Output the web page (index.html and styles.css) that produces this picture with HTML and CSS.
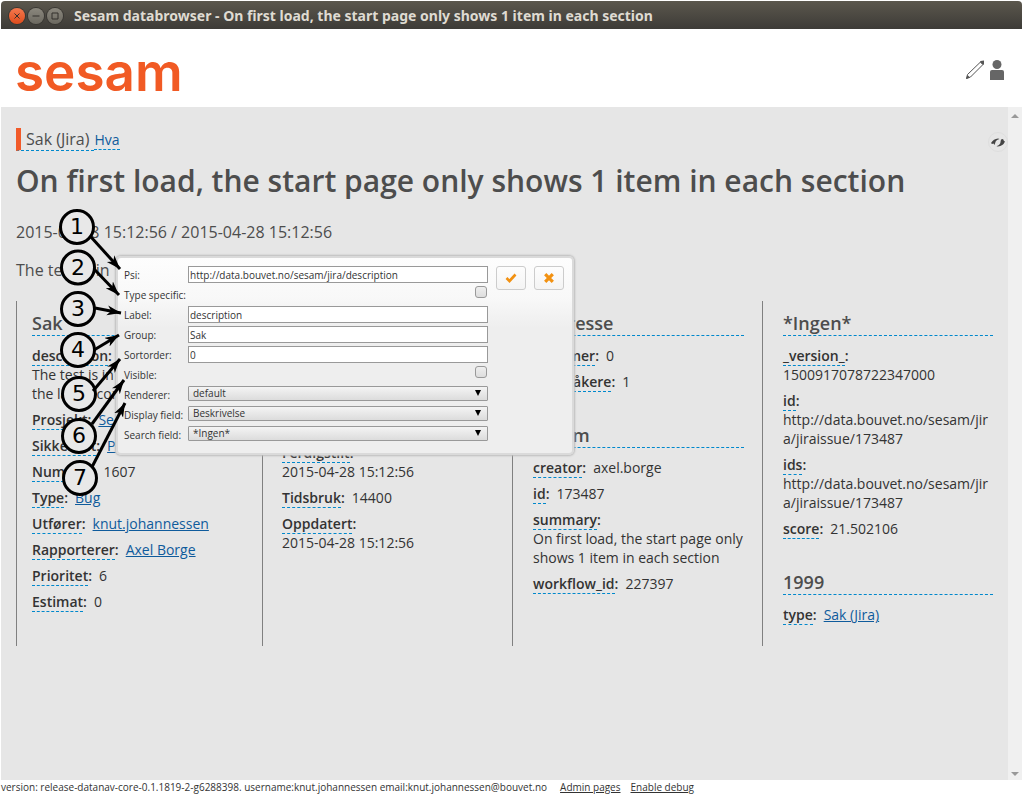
FILE: index.html
```html
<!DOCTYPE html>
<html lang="no">
<head>
<meta charset="utf-8">
<title>Sesam databrowser</title>
<link rel="stylesheet" href="styles.css">
</head>
<body>
<div class="titlebar">
  <button class="win close" aria-label="Close"><svg viewBox="0 0 16 16"><path d="M5.500 5.500l5 5M10.500 5.500l-5 5"/></svg></button>
  <button class="win" aria-label="Minimize"><svg viewBox="0 0 16 16"><path d="M4.500 8h7"/></svg></button>
  <button class="win" aria-label="Maximize"><svg viewBox="0 0 16 16"><path d="M5 5h6v6H5z"/></svg></button>
  <span class="title">Sesam databrowser - On first load, the start page only shows 1 item in each section</span>
</div>
<header class="header">
  <span class="logo">sesam</span>
  <div class="tools">
    <button class="plain" aria-label="Edit"><svg width="20" height="20" viewBox="0 0 20 20"><path d="M1.500 18.500l1-4L15.500 2l2.500 2.500L5.500 17z" fill="#fff" stroke="#555"/><path d="M1 19l1.500-4 2.500 2.500zM15.500 1l3.500-.5v3.500l-1 1-3-3z" fill="#555"/></svg></button>
    <button class="plain" aria-label="User"><svg width="14" height="20" viewBox="0 0 14 20"><circle cx="7" cy="4.500" r="4.500" fill="#666"/><path d="M0 12q0-2 2-2h10q2 0 2 2v8H0z" fill="#666"/></svg></button>
  </div>
</header>
<div class="body">
<main class="main">
  <div class="crumb"><span class="kind">Sak (Jira)</span> <a class="hva" href="#">Hva</a></div>
  <button class="eye" aria-label="Show hidden fields"><svg width="14" height="9" viewBox="0 0 14 9"><path d="M0 5Q2.500 1 7 .6L8.500 1 6 2Q4.200 3.400 4.200 5L3.500 7 2.500 5.500 1 6z" fill="#444"/><path d="M14 3.600Q12 8.200 7 8.600L5.500 8.200 8 7Q9.800 5.500 9.600 3.600L10 1.600 12 1 13 3z" fill="#444"/></svg></button>
  <h1>On first load, the start page only shows 1 item in each section</h1>
  <p class="lead">2015-04-28 15:12:56 / 2015-04-28 15:12:56</p>
  <p class="lead">The test is in</p>
  <div class="columns">
    <section class="col">
      <h3>Sak</h3>
      <dl>
        <div><dt><span>description</span>:</dt><dd class="block">The test is in<br>the latest con</dd></div>
        <div><dt><span>Prosjekt</span>:</dt><dd><a href="#">Se</a></dd></div>
        <div><dt><span>Sikkerhet</span>:</dt><dd><a href="#">P</a></dd></div>
        <div><dt><span>Nummer</span>:</dt><dd>1607</dd></div>
        <div><dt><span>Type</span>:</dt><dd><a href="#">Bug</a></dd></div>
        <div><dt><span>Utfører</span>:</dt><dd><a href="#">knut.johannessen</a></dd></div>
        <div><dt><span>Rapporterer</span>:</dt><dd><a href="#">Axel Borge</a></dd></div>
        <div><dt><span>Prioritet</span>:</dt><dd>6</dd></div>
        <div><dt><span>Estimat</span>:</dt><dd>0</dd></div>
      </dl>
    </section>
    <section class="col covered">
      <dl>
        <div><dt><span>Ferdigstilt</span>:</dt><dd class="block">2015-04-28 15:12:56</dd></div>
        <div><dt><span>Tidsbruk</span>:</dt><dd>14400</dd></div>
        <div><dt><span>Oppdatert</span>:</dt><dd class="block">2015-04-28 15:12:56</dd></div>
      </dl>
    </section>
    <section class="col">
      <h3>Interesse</h3>
      <dl>
        <div><dt><span>Stemmer</span>:</dt><dd>0</dd></div>
        <div><dt><span>Overvåkere</span>:</dt><dd>1</dd></div>
      </dl>
      <h3>Sesam</h3>
      <dl>
        <div><dt><span>creator</span>:</dt><dd>axel.borge</dd></div>
        <div><dt><span>id</span>:</dt><dd>173487</dd></div>
        <div><dt><span>summary</span>:</dt><dd class="block">On first load, the start page only shows 1 item in each section</dd></div>
        <div><dt><span>workflow_id</span>:</dt><dd>227397</dd></div>
      </dl>
    </section>
    <section class="col">
      <h3>*Ingen*</h3>
      <dl>
        <div><dt><span>_version_</span>:</dt><dd class="block">1500917078722347000</dd></div>
        <div><dt><span>id</span>:</dt><dd class="block">http://data.bouvet.no/sesam/jira/jiraissue/173487</dd></div>
        <div><dt><span>ids</span>:</dt><dd class="block">http://data.bouvet.no/sesam/jira/jiraissue/173487</dd></div>
        <div><dt><span>score</span>:</dt><dd>21.502106</dd></div>
      </dl>
      <h3>1999</h3>
      <dl>
        <div><dt><span>type</span>:</dt><dd><a href="#">Sak (Jira)</a></dd></div>
      </dl>
    </section>
  </div>

  <form class="dialog">
    <div class="fields">
      <label for="psi">Psi:</label><input id="psi" type="text" value="http://data.bouvet.no/sesam/jira/description">
      <label for="spec">Type specific:</label><input id="spec" type="checkbox">
      <label for="lab">Label:</label><input id="lab" type="text" value="description">
      <label for="grp">Group:</label><input id="grp" type="text" value="Sak">
      <label for="sort">Sortorder:</label><input id="sort" type="text" value="0">
      <label for="vis">Visible:</label><input id="vis" type="checkbox">
      <label for="ren">Renderer:</label><div class="pick"><select id="ren"><option>default</option></select></div>
      <label for="disp">Display field:</label><div class="pick"><select id="disp"><option>Beskrivelse</option></select></div>
      <label for="sea">Search field:</label><div class="pick"><select id="sea"><option>*Ingen*</option></select></div>
    </div>
    <button type="button" class="act" aria-label="Save"><svg width="12" height="10" viewBox="0 0 12 10"><path d="M1.500 5l3 3L10.500 1.500" fill="none" stroke="#f29111" stroke-width="2.600"/></svg></button>
    <button type="button" class="act" aria-label="Cancel"><svg width="10" height="10" viewBox="0 0 10 10"><path d="M1.200 1.200l7.600 7.600M8.800 1.200L1.200 8.800" fill="none" stroke="#f29111" stroke-width="3.200"/></svg></button>
  </form>

  <svg class="notes" width="140" height="300" viewBox="0 200 140 300">
    <defs><marker id="tip" markerUnits="userSpaceOnUse" markerWidth="16" markerHeight="12" refX="14" refY="5" orient="auto"><path d="M0 0L14 5 0 10 4 5z"/></marker></defs>
    <g class="rings">
      <circle cx="77" cy="227" r="16.500"/><circle cx="78" cy="267.500" r="16.500"/><circle cx="78" cy="309" r="16.500"/><circle cx="78" cy="350" r="16.500"/><circle cx="79" cy="394" r="16.500"/><circle cx="79" cy="436" r="16.500"/><circle cx="80" cy="478" r="16.500"/>
    </g>
    <g class="arrows">
      <path d="M91 237L120 269"/><path d="M94 269L119 295"/><path d="M95 308L121 313"/><path d="M94 350L119 335"/><path d="M93 391L120 359"/><path d="M92 424L124 380"/><path d="M92 467L125 403"/>
    </g>
    <g class="nums">
      <text x="77" y="234">1</text><text x="78" y="275">2</text><text x="78" y="316">3</text><text x="78" y="357">4</text><text x="79" y="401">5</text><text x="79" y="443">6</text><text x="80" y="485">7</text>
    </g>
  </svg>
</main>
<div class="scroll"><i class="up"></i><i class="down"></i></div>
</div>
<footer class="footer"><span>version: release-datanav-core-0.1.1819-2-g6288398. username:knut.johannessen email:knut.johannessen@bouvet.no</span><a href="#">Admin pages</a><a href="#">Enable debug</a></footer>
</body>
</html>
```
FILE: styles.css
```css
* { box-sizing: border-box; }
body {
  margin: 0;
  padding: 1px 0 0 1px;
  min-height: 100vh;
  display: flex;
  flex-direction: column;
  background: #fff;
  color: #333;
  font: 14px/19px "Open Sans", "Noto Sans", sans-serif;
}
button { padding: 0; border: 0; background: none; }
svg { display: block; }
.titlebar {
  height: 28px;
  display: flex;
  align-items: center;
  gap: 3px;
  padding: 2px 0 0 8px;
  background: linear-gradient(#5b574d, #3d3b37);
  border-radius: 4px 4px 0 0;
}
.win {
  width: 16px;
  height: 16px;
  border-radius: 50%;
  background: linear-gradient(#8a877d, #6c6960);
  box-shadow: 0 0 0 1px #393733;
}
.win.close { background: linear-gradient(#f4794f, #df4c1c); }
.win path { fill: none; stroke: #33312c; stroke-width: 1; }
.title { margin-left: 8px; color: #dfdbd2; font: 700 14px/20px "Noto Sans", sans-serif; white-space: nowrap; }
.header {
  height: 78px;
  padding: 0 18px 0 14px;
  display: flex;
  justify-content: space-between;
  align-items: center;
}
.logo {
  color: #f15a24;
  font: 600 53px/60px Inter, sans-serif;
  padding-top: 7px;
}
.tools { display: flex; gap: 5px; padding-top: 4px; }
.body { flex: 1; display: flex; background: #e6e6e6; }
.main { flex: 1; min-width: 0; position: relative; padding: 21px 15px 0; }
.scroll {
  width: 14px;
  background: #f0f0f0;
  display: flex;
  flex-direction: column;
  justify-content: space-between;
  align-items: center;
  padding: 7px 0 4px;
}
.scroll i { border: 4px solid transparent; }
.scroll .up { border-top: 0; border-bottom-color: #999; }
.scroll .down { border-bottom: 0; border-top-color: #999; }
.crumb { display: flex; align-items: flex-start; }
.kind {
  font-size: 16px;
  line-height: 22px;
  color: #4d4d4d;
  border-left: 5px solid #f15a29;
  border-bottom: 1px dashed #0088cc;
  padding: 0 5px;
}
.hva { line-height: 19px; padding-top: 2px; text-decoration: none; border-bottom: 1px dashed #0088cc; }
a { color: #0f5b9c; }
.eye {
  position: absolute;
  top: 25px;
  right: 0;
  width: 20px;
  height: 20px;
  border: 1px solid #dedede;
  border-radius: 50%;
  display: grid;
  place-items: center;
}
h1 { margin: 10px 0 0; font-size: 30px; line-height: 40px; font-weight: 600; color: #4d4d4d; }
.lead { margin: 0; padding-top: 20px; font-size: 16px; line-height: 22px; color: #4d4d4d; }
.lead + .lead { padding-top: 16px; }
.columns {
  margin-top: 20px;
  display: grid;
  grid-template-columns: 246fr 250fr 250fr 231fr;
  min-height: 345px;
}
.col { border-left: 1px solid #808080; padding: 12px 18px 0 20px; }
.col:first-child { padding-left: 15px; }
.col:last-child { padding-right: 0; }
.covered { padding: 142px 18px 0 19px; }
h3 {
  margin: 0 0 10px;
  padding-bottom: 2px;
  font-size: 18px;
  line-height: 20px;
  font-weight: 600;
  color: #4d4d4d;
  border-bottom: 1px dashed #0088cc;
}
dl { margin: 0 0 34px; display: grid; gap: 7px; }
dl:last-child { margin: 0; }
dt { float: left; font-weight: 600; margin-right: 7px; }
dt span { border-bottom: 1px dashed #0088cc; }
dd { margin: 0; overflow-wrap: anywhere; }
dd.block { clear: both; }
.dialog {
  position: absolute;
  left: 115px;
  top: 149px;
  display: flex;
  align-items: flex-start;
  gap: 8px;
  width: 458px;
  height: 199px;
  padding: 8px 8px 0 6px;
  border: 2px solid #dadada;
  border-radius: 5px;
  box-shadow: 0 0 2px 1px #bbb;
  background: linear-gradient(#fdfdfd, #f8f8f8 40px, #eee 70px);
  font-size: 10px;
}
.fields { display: grid; grid-template-columns: 64px 300px; grid-auto-rows: 20px; }
.fields label { line-height: 18px; white-space: nowrap; }
.fields input, .fields select { font: 10px/13px "Open Sans", sans-serif; color: #333; margin: 0; }
.fields input[type="text"] { width: 100%; height: 17px; padding: 0 1px; border: 1px solid #999; background: #fff; }
.fields input[type="checkbox"] {
  appearance: none;
  width: 12px;
  height: 12px;
  justify-self: end;
  margin-right: 1px;
  border: 1px solid #999;
  border-radius: 3px;
  background: linear-gradient(#eee, #ddd);
}
.pick { position: relative; height: 15px; }
.pick select {
  appearance: none;
  display: block;
  width: 100%;
  height: 15px;
  padding: 0 4px;
  border: 1px solid #999;
  border-radius: 1px;
  background: linear-gradient(#f4f4f4, #dcdcdc);
}
.pick::after {
  content: "";
  position: absolute;
  right: 7px;
  top: 4px;
  border: 3px solid transparent;
  border-top: 6px solid #000;
  border-bottom: 0;
}
.act {
  width: 30px;
  height: 24px;
  border: 1px solid #ccc;
  border-radius: 3px;
  background: linear-gradient(#fdfdfd, #f4f4f4);
  display: grid;
  place-items: center;
}
.notes { position: absolute; left: -1px; top: 93px; pointer-events: none; }
.rings { fill: #e8e8e8; stroke: #000; stroke-width: 3; }
.arrows { fill: none; stroke: #000; stroke-width: 3; }
.arrows path { marker-end: url(#tip); }
#tip path { fill: #000; stroke: none; }
.nums { font: 22px "DejaVu Sans", sans-serif; text-anchor: middle; fill: #000; }
.footer { height: 17px; font-size: 10px; line-height: 15px; color: #333; display: flex; gap: 10px; }
.footer span { margin-right: 3px; }
.footer a { color: #333; }
```
